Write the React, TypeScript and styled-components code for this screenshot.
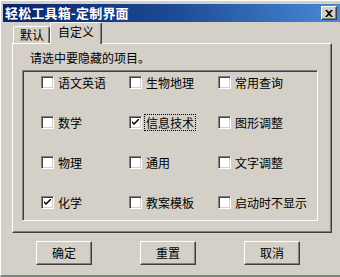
import React, { useState } from "react";
import styled, { createGlobalStyle } from "styled-components";

const GlobalStyle = createGlobalStyle`
  html, body {
    margin: 0;
    padding: 0;
    background: #d4d0c8;
  }
  body {
    font-family: "Noto Sans CJK SC", "DejaVu Sans", sans-serif;
    font-size: 12px;
    color: #000;
  }
`

const Window = styled.div`
  box-sizing: border-box;
  width: 340px;
  height: 277px;
  padding: 4px 0 0 3px;
  background: #d4d0c8;
  border-left: 1px solid #ffffff;
  border-top: 1px solid #ffffff;
  border-bottom: 2px solid #808080;
  display: flex;
  flex-direction: column;
`

const TitleBar = styled.div`
  height: 18px;
  margin-top: -1px;
  margin-left: -1px;
  display: flex;
  align-items: center;
  justify-content: space-between;
  padding: 0 3px 0 2px;
  background: linear-gradient(to right, #0a246a 0%, #1c4a94 50%, #4a8ad6 100%);
`

const Title = styled.span`
  color: #fff;
  font-weight: bold;
  font-size: 13px;
  line-height: 18px;
  letter-spacing: 0.2px;
`

const CloseButton = styled.div`
  box-sizing: border-box;
  width: 16px;
  height: 14px;
  background: #d4d0c8;
  border-top: 1px solid #fff;
  border-left: 1px solid #fff;
  border-right: 1px solid #404040;
  border-bottom: 1px solid #404040;
  box-shadow: inset -1px -1px 0 #808080;
  display: flex;
  align-items: center;
  justify-content: center;
`

const Content = styled.div`
  padding-left: 8px;
  display: flex;
  flex-direction: column;
`

const TabStrip = styled.div`
  height: 21px;
  display: flex;
  align-items: flex-end;
  padding-left: 1px;
  position: relative;
  z-index: 1;
`

const Tab = styled.div<{ $active?: boolean }>`
  box-sizing: border-box;
  height: ${(p) => (p.$active ? "22px" : "17px")};
  margin-bottom: ${(p) => (p.$active ? "-1px" : "0")};
  padding: ${(p) => (p.$active ? "2px 7px 0 7px" : "1px 5px 0 6px")};
  background: #d4d0c8;
  border-top: 1px solid #fff;
  border-left: 1px solid #fff;
  border-right: 1px solid #404040;
  box-shadow: inset -1px 0 0 #808080;
  border-radius: 2px 2px 0 0;
  line-height: 14px;
  white-space: nowrap;
`

const Panel = styled.div`
  box-sizing: border-box;
  width: 320px;
  height: 190px;
  border-top: 1px solid #fff;
  border-left: 1px solid #fff;
  border-right: 1px solid #404040;
  border-bottom: 1px solid #404040;
  box-shadow: inset -1px -1px 0 #808080;
  padding: 7px 0 0 9px;
`

const Prompt = styled.div`
  padding-left: 8px;
  line-height: 14px;
  height: 19px;
`

const GroupBox = styled.div`
  box-sizing: border-box;
  width: 296px;
  height: 151px;
  border-top: 1px solid #808080;
  border-left: 1px solid #808080;
  border-right: 1px solid #fff;
  border-bottom: 1px solid #fff;
  box-shadow: inset 1px 1px 0 #404040;
  padding: 5px 0 0 18px;
`

const Grid = styled.div`
  display: grid;
  grid-template-columns: 88px 89px auto;
  grid-auto-rows: 13px;
  row-gap: 27px;
`

const Item = styled.label`
  display: flex;
  align-items: center;
  gap: 2px;
  height: 13px;
  cursor: default;
`

const Box = styled.span`
  box-sizing: border-box;
  width: 13px;
  height: 13px;
  flex: none;
  background: #fff;
  border-top: 1px solid #808080;
  border-left: 1px solid #808080;
  border-right: 1px solid #fff;
  border-bottom: 1px solid #fff;
  box-shadow: inset 1px 1px 0 #404040, inset -1px -1px 0 #d4d0c8;
  display: flex;
  align-items: center;
  justify-content: center;
`

const Label = styled.span<{ $focus?: boolean }>`
  padding: 1px 1px;
  line-height: 13px;
  border: 1px dotted ${(p) => (p.$focus ? "#000" : "transparent")};
  white-space: nowrap;
`

const ButtonRow = styled.div`
  display: flex;
  gap: 48px;
  padding: 8px 0 0 32px;
`

const Button = styled.div`
  box-sizing: border-box;
  width: 56px;
  height: 24px;
  background: #d4d0c8;
  border-top: 1px solid #fff;
  border-left: 1px solid #fff;
  border-right: 1px solid #404040;
  border-bottom: 1px solid #404040;
  box-shadow: inset -1px -1px 0 #808080;
  display: flex;
  align-items: center;
  justify-content: center;
  padding-bottom: 1px;
`

const items = [
  "语文英语", "生物地理", "常用查询",
  "数学", "信息技术", "图形调整",
  "物理", "通用", "文字调整",
  "化学", "教案模板", "启动时不显示",
]

const Check = () => (
  <svg width="7" height="7" viewBox="0 0 7 7">
    <path d="M0 2 L0 4 L2 6 L7 1 L7 -1 L2 4 Z" fill="#000" />
  </svg>
)

const App: React.FunctionComponent = () => {
  const [checked, setChecked] = useState<string[]>(["信息技术", "化学"])

  function toggle(name: string) {
    setChecked((c) => (c.includes(name) ? c.filter((n) => n !== name) : [...c, name]))
  }

  return <>
    <GlobalStyle />
    <Window>
      <TitleBar>
        <Title>轻松工具箱-定制界面</Title>
        <CloseButton>
          <svg width="8" height="7" viewBox="0 0 8 7">
            <path d="M0 0 L2 0 L4 2 L6 0 L8 0 L5 3.5 L8 7 L6 7 L4 5 L2 7 L0 7 L3 3.5 Z" fill="#000" />
          </svg>
        </CloseButton>
      </TitleBar>
      <Content>
        <TabStrip>
          <Tab>默认</Tab>
          <Tab $active>自定义</Tab>
        </TabStrip>
        <Panel>
          <Prompt>请选中要隐藏的项目。</Prompt>
          <GroupBox>
            <Grid>
              {items.map((name) => (
                <Item key={name} onClick={() => toggle(name)}>
                  <Box>{checked.includes(name) && <Check />}</Box>
                  <Label $focus={name === "信息技术"}>{name}</Label>
                </Item>
              ))}
            </Grid>
          </GroupBox>
        </Panel>
      </Content>
      <ButtonRow>
        <Button>确定</Button>
        <Button>重置</Button>
        <Button>取消</Button>
      </ButtonRow>
    </Window>
  </>
}

export default App
